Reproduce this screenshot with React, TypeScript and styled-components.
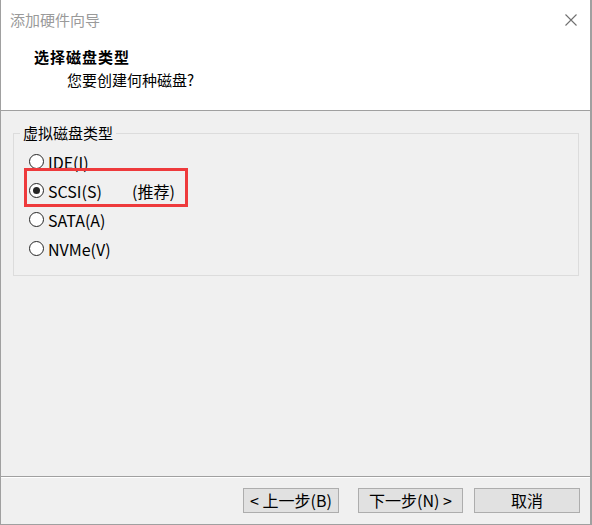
import React from 'react';
import { styled, createGlobalStyle } from 'styled-components';

const GlobalStyle = createGlobalStyle`
  html, body {
    margin: 0;
    padding: 0;
    background: #ffffff;
  }
  * {
    box-sizing: border-box;
  }
`;

const diskTypes = [
  { label: 'IDE(I)', checked: false },
  { label: 'SCSI(S)', checked: true, note: '(推荐)' },
  { label: 'SATA(A)', checked: false },
  { label: 'NVMe(V)', checked: false },
];

const App = () => {
  return (
    <>
      <GlobalStyle />
      <Window>
        <TitleBar>
          <Title>添加硬件向导</Title>
          <CloseButton aria-label="关闭">
            <svg width="12" height="12" viewBox="0 0 12 12">
              <path d="M0.5 0.5 L11.5 11.5 M11.5 0.5 L0.5 11.5" stroke="#707070" strokeWidth="1.1" fill="none" />
            </svg>
          </CloseButton>
        </TitleBar>
        <Header>
          <Heading>选择磁盘类型</Heading>
          <SubHeading>您要创建何种磁盘?</SubHeading>
        </Header>
        <Content>
          <GroupBox>
            <Legend>虚拟磁盘类型</Legend>
            <RadioList>
              {diskTypes.map((d) => (
                <RadioRow key={d.label}>
                  <RadioCircle $checked={d.checked} />
                  <RadioLabel>{d.label}</RadioLabel>
                  {d.note && <Note>{d.note}</Note>}
                  {d.checked && <Highlight />}
                </RadioRow>
              ))}
            </RadioList>
          </GroupBox>
        </Content>
        <Footer>
          <Button $width={96}>&lt; 上一步(B)</Button>
          <Button $width={105} $gap={19}>下一步(N) &gt;</Button>
          <Button $width={106} $gap={11}>取消</Button>
        </Footer>
      </Window>
    </>
  );
};

export default App;

const Window = styled.div`
  width: 592px;
  height: 525px;
  display: flex;
  flex-direction: column;
  background: #f0f0f0;
  border-left: 1px solid #a0a0a0;
  border-right: 2px solid #a0a0a0;
  border-bottom: 1px solid #a0a0a0;
  font-family: 'Noto Sans CJK SC', 'Microsoft YaHei', sans-serif;
  color: #000000;
`;

const TitleBar = styled.div`
  height: 40px;
  background: #ffffff;
  display: flex;
  align-items: center;
  justify-content: space-between;
  padding: 0 13px 1px 9px;
`;

const Title = styled.div`
  font-size: 15px;
  line-height: 20px;
  color: #9a9a9a;
`;

const CloseButton = styled.div`
  width: 12px;
  height: 12px;
  display: flex;
  svg {
    display: block;
  }
`;

const Header = styled.div`
  height: 71px;
  background: #ffffff;
  border-bottom: 1px solid #a0a0a0;
  padding: 7px 0 0 33px;
`;

const Heading = styled.div`
  font-size: 15px;
  font-weight: bold;
  line-height: 20px;
  letter-spacing: 1px;
`;

const SubHeading = styled.div`
  font-size: 15px;
  line-height: 20px;
  margin-top: 3px;
  padding-left: 33px;
`;

const Content = styled.div`
  flex: 1;
  padding: 12px 11px 0 12px;
`;

const GroupBox = styled.fieldset`
  margin: 0;
  padding: 4px 0 12px 6px;
  border: 1px solid #dcdcdc;
  min-width: 0;
`;

const Legend = styled.legend`
  padding: 0 3px;
  font-size: 15px;
  line-height: 20px;
`;

const RadioList = styled.div`
  display: flex;
  flex-direction: column;
`;

const RadioRow = styled.div`
  position: relative;
  height: 29px;
  display: flex;
  align-items: center;
  padding-left: 9px;
  font-size: 16px;
`;

const RadioCircle = styled.span<{ $checked?: boolean }>`
  width: 15px;
  height: 15px;
  border-radius: 50%;
  border: 1px solid #262626;
  background: #ffffff;
  display: flex;
  align-items: center;
  justify-content: center;
  flex-shrink: 0;
  &::after {
    content: '';
    width: 7px;
    height: 7px;
    border-radius: 50%;
    background: ${(p) => (p.$checked ? '#262626' : 'transparent')};
  }
`;

const RadioLabel = styled.span`
  margin-left: 4px;
  min-width: 84px;
  line-height: 20px;
`;

const Note = styled.span`
  line-height: 20px;
`;

const Highlight = styled.span`
  position: absolute;
  left: 4px;
  top: -8px;
  width: 164px;
  height: 39px;
  border: 3px solid #ee3a3c;
  pointer-events: none;
`;

const Footer = styled.div`
  height: 48px;
  border-top: 1px solid #a0a0a0;
  box-shadow: inset 0 1px 0 #ffffff;
  display: flex;
  align-items: flex-start;
  justify-content: flex-end;
  padding: 11px 10px 0 0;
`;

const Button = styled.button<{ $width: number; $gap?: number }>`
  width: ${(p) => p.$width}px;
  height: 25px;
  margin-left: ${(p) => p.$gap ?? 0}px;
  padding: 0;
  background: #e1e1e1;
  border: 1px solid #adadad;
  font-family: 'Noto Sans CJK SC', 'Microsoft YaHei', sans-serif;
  font-size: 16px;
  line-height: 21px;
  color: #000000;
`;
